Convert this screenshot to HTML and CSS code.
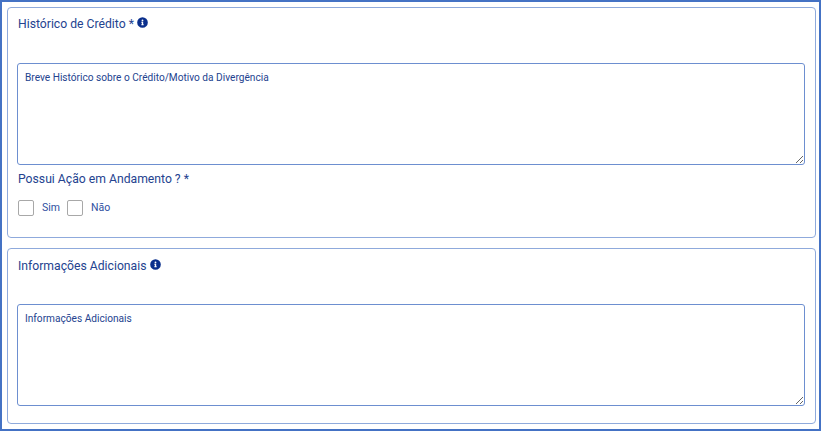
FILE: index.html
```html
<!DOCTYPE html>
<html>
<head>
    <title>Histórico de Crédito</title>
    <link rel="stylesheet" href="styles.css">
</head>
<body>
    <div class="frame">
        <div class="card card-first">
            <h2 class="card-title">Histórico de Crédito * <svg class="info" viewBox="0 0 512 512"><path d="M256 8a248 248 0 1 0 0 496 248 248 0 0 0 0-496zm0 110a42 42 0 1 1 0 84 42 42 0 0 1 0-84zm56 254c0 7-5 12-12 12h-88c-7 0-12-5-12-12v-24c0-7 5-12 12-12h12v-64h-12c-7 0-12-5-12-12v-24c0-7 5-12 12-12h64c7 0 12 5 12 12v100h12c7 0 12 5 12 12z"/></svg></h2>
            <textarea class="field" placeholder="Breve Histórico sobre o Crédito/Motivo da Divergência"></textarea>
            <h2 class="card-title question">Possui Ação em Andamento ? *</h2>
            <div class="options">
                <label class="option"><input type="checkbox"><span>Sim</span></label>
                <label class="option"><input type="checkbox"><span>Não</span></label>
            </div>
        </div>
        <div class="card card-second">
            <h2 class="card-title">Informações Adicionais <svg class="info" viewBox="0 0 512 512"><path d="M256 8a248 248 0 1 0 0 496 248 248 0 0 0 0-496zm0 110a42 42 0 1 1 0 84 42 42 0 0 1 0-84zm56 254c0 7-5 12-12 12h-88c-7 0-12-5-12-12v-24c0-7 5-12 12-12h12v-64h-12c-7 0-12-5-12-12v-24c0-7 5-12 12-12h64c7 0 12 5 12 12v100h12c7 0 12 5 12 12z"/></svg></h2>
            <textarea class="field" placeholder="Informações Adicionais"></textarea>
        </div>
    </div>
</body>
</html>
```

FILE: styles.css
```css
html, body {
    margin: 0;
    height: 100%;
    background-color: white;
    overflow: hidden;
}
.frame {
    box-sizing: border-box;
    width: 821px;
    height: 431px;
    border: 2px solid #4472c4;
    padding: 5px 3px 0 5px;
    font-family: Roboto, sans-serif;
    color: #24438f;
}
.card {
    box-sizing: border-box;
    border: 1px solid #8faadc;
    border-radius: 4px;
    padding: 0 9px;
    display: flex;
    flex-direction: column;
    align-items: flex-start;
}
.card-first {
    height: 231px;
    margin-bottom: 10px;
}
.card-second {
    height: 176px;
}
.card-title {
    margin: 8px 0 0 1px;
    height: 16px;
    font-size: 12.2px;
    font-weight: 400;
    line-height: 16px;
}
.card-second .card-title {
    margin-top: 9px;
}
.question {
    margin-top: 6px;
    height: 20px;
}
.info {
    width: 11px;
    height: 11px;
    fill: #0a2f8c;
}
.field {
    box-sizing: border-box;
    display: block;
    width: 788px;
    height: 102px;
    margin-top: 31px;
    padding: 7px 7px;
    border: 1px solid #6d8fd0;
    border-radius: 3px;
    outline: none;
    font-family: Roboto, sans-serif;
    font-size: 10.15px;
    line-height: 14px;
    color: #24438f;
}
.card-second .field {
    margin-top: 30px;
}
.field::placeholder {
    color: #24438f;
    opacity: 1;
}
.options {
    display: flex;
    gap: 7px;
    margin-top: 9px;
    margin-left: 1px;
}
.option {
    display: flex;
    align-items: center;
    gap: 8px;
    font-size: 10.5px;
    color: #2f4f9f;
}
.option span {
    margin-bottom: 2px;
}
.option input {
    appearance: none;
    box-sizing: border-box;
    width: 16px;
    height: 16px;
    margin: 0;
    background-color: white;
    border: 1px solid #a8a8a8;
    border-radius: 2px;
}
```
